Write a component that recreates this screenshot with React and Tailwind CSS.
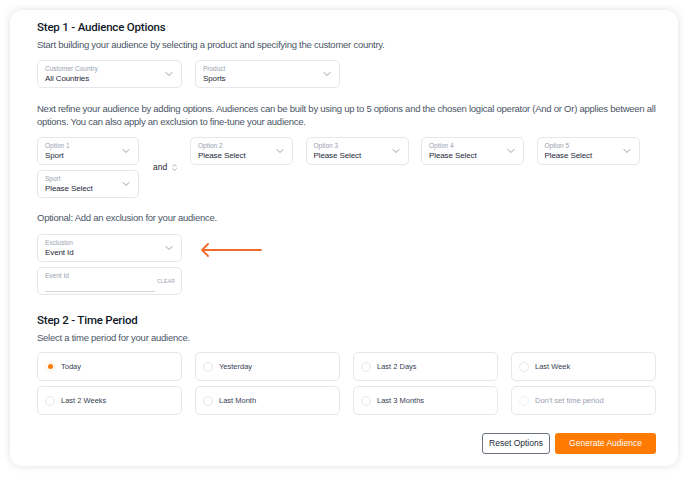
import { ChevronDown, ChevronsUpDown } from 'lucide-react';

function Select({ label, value, className = '' }) {
  return (
    <div className={`h-[28px] rounded-[5px] border border-gray-200 bg-white pl-[7px] pr-[6px] flex items-center justify-between ${className}`}>
      <div className="flex flex-col">
        <span className="text-[6.5px] leading-[9px] text-gray-400">{label}</span>
        <span className="text-[8px] leading-[11px] tracking-[-0.1px] text-gray-800">{value}</span>
      </div>
      <ChevronDown className="w-[12px] h-[12px] text-gray-500" strokeWidth={1.4} />
    </div>
  );
}

function Radio({ label, checked, disabled }) {
  return (
    <div className="h-[29px] rounded-[5px] border border-gray-200 bg-white pl-[7px] flex items-center gap-[6px]">
      <span className={`w-[10px] h-[10px] rounded-full border flex items-center justify-center ${checked ? 'border-orange-100' : disabled ? 'border-gray-100' : 'border-gray-200'}`}>
        {checked && <span className="w-[5px] h-[5px] rounded-full bg-[#ff7a00]"></span>}
      </span>
      <span className={`text-[7.5px] ${disabled ? 'text-gray-400' : 'text-gray-700'}`}>{label}</span>
    </div>
  );
}

const titleFont = { fontFamily: 'Roboto, "Liberation Sans", sans-serif' };

export default function App() {
  const periods = [
    { label: 'Today', checked: true },
    { label: 'Yesterday' },
    { label: 'Last 2 Days' },
    { label: 'Last Week' },
    { label: 'Last 2 Weeks' },
    { label: 'Last Month' },
    { label: 'Last 3 Months' },
    { label: "Don't set time period", disabled: true },
  ];

  return (
    <div className="w-[688px] h-[479px] bg-white pt-[10px] pl-[10px]" style={{ fontFamily: '"Liberation Sans", Arial, sans-serif' }}>
      <div className="w-[668px] h-[456px] rounded-[12px] bg-white shadow-[0_0_8px_rgba(0,0,0,0.13)] pl-[27px] pr-[22px] pt-[9px]">
        {/* Step 1 */}
        <h1 className="text-[11.5px] leading-[16px] font-medium tracking-[-0.2px] text-gray-900" style={titleFont}>Step 1 - Audience Options</h1>
        <p className="mt-[3px] text-[9.5px] leading-[13px] tracking-[-0.25px] text-gray-600">
          Start building your audience by selecting a product and specifying the customer country.
        </p>
        <div className="mt-[9px] flex gap-[13px]">
          <Select label="Customer Country" value="All Countries" className="w-[145px]" />
          <Select label="Product" value="Sports" className="w-[145px]" />
        </div>

        <p className="mt-[14px] text-[9.5px] leading-[13px] tracking-[-0.25px] text-gray-600 w-[619px]">
          Next refine your audience by adding options. Audiences can be built by using up to 5 options and the chosen logical operator (And or Or) applies between all options. You can also apply an exclusion to fine-tune your audience.
        </p>
        <div className="mt-[9px] flex items-start">
          <div className="flex flex-col gap-[5px] w-[102px]">
            <Select label="Option 1" value="Sport" />
            <Select label="Sport" value="Please Select" />
          </div>
          <div className="self-center w-[51px] pl-[14px] flex items-center gap-[3px] text-[8.5px] text-gray-800">
            and
            <ChevronsUpDown className="w-[9px] h-[9px] text-gray-500" strokeWidth={1.5} />
          </div>
          <div className="flex gap-[12.5px]">
            <Select label="Option 2" value="Please Select" className="w-[103px]" />
            <Select label="Option 3" value="Please Select" className="w-[103px]" />
            <Select label="Option 4" value="Please Select" className="w-[103px]" />
            <Select label="Option 5" value="Please Select" className="w-[103px]" />
          </div>
        </div>

        <p className="mt-[13px] text-[9.5px] leading-[13px] tracking-[-0.25px] text-gray-600">Optional: Add an exclusion for your audience.</p>
        <div className="mt-[10px] flex items-center">
          <Select label="Exclusion" value="Event Id" className="w-[145px]" />
          <svg className="ml-[18px] mt-[4px]" width="62" height="14" viewBox="0 0 62 14" fill="none">
            <path d="M61 7H2M8 1L2 7l6 6" stroke="#f26b2a" strokeWidth="1.8" strokeLinecap="round" strokeLinejoin="round" />
          </svg>
        </div>
        <div className="mt-[5px] w-[145px] h-[28px] rounded-[5px] border border-gray-200 pl-[7px] pr-[6px] flex items-start">
          <div className="w-[114px] pt-[3px]">
            <div className="text-[6.5px] leading-[9px] text-gray-400">Event Id</div>
            <div className="mt-[11px] h-px bg-gray-300"></div>
          </div>
          <span className="ml-[2px] mt-[10px] text-[5px] tracking-[0.2px] text-gray-400">CLEAR</span>
        </div>

        {/* Step 2 */}
        <h2 className="mt-[17px] text-[11.5px] leading-[16px] font-medium tracking-[-0.2px] text-gray-900" style={titleFont}>Step 2 - Time Period</h2>
        <p className="mt-[3px] text-[9.5px] leading-[13px] tracking-[-0.25px] text-gray-600">Select a time period for your audience.</p>
        <div className="mt-[8px] grid grid-cols-4 gap-x-[13px] gap-y-[5px] w-[619px]">
          {periods.map((p) => (
            <Radio key={p.label} {...p} />
          ))}
        </div>

        <div className="mt-[18px] w-[619px] flex justify-end gap-[5px]">
          <button className="h-[21px] w-[68px] rounded-[3px] border border-gray-500 text-[8.5px] text-gray-800">Reset Options</button>
          <button className="h-[21px] w-[101px] rounded-[3px] bg-[#ff7a00] text-[8.5px] text-white">Generate Audience</button>
        </div>
      </div>
    </div>
  );
}
